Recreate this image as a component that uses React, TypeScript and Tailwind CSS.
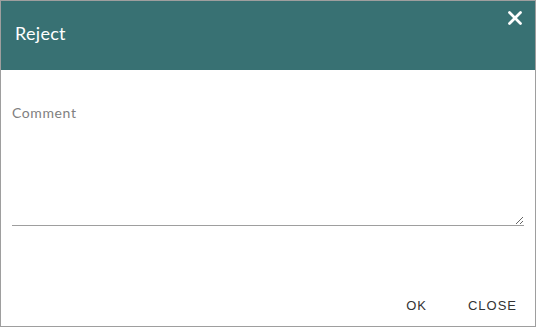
import { X } from 'lucide-react';

export default function App() {
  return (
    <div className="w-[536px] h-[327px] border border-[#9e9e9e] bg-white flex flex-col">
      <div className="h-[69px] bg-[#387173] flex justify-between pl-[14px] pr-[9px]">
        <h2 className="self-center -mt-[4px] text-white text-[18px] font-normal tracking-[0.3px]" style={{ fontFamily: 'Lato, sans-serif' }}>
          Reject
        </h2>
        <button className="self-start mt-[6px] text-white">
          <X className="w-[22px] h-[22px]" strokeWidth={3} />
        </button>
      </div>
      <div className="px-[11px] pt-[33px]">
        <textarea
          placeholder="Comment"
          className="w-full h-[123px] border-0 border-b border-[#9e9e9e] outline-none text-[14px] text-[#333] placeholder:text-[#808080] resize-y leading-5 pt-0 tracking-[0.6px]"
          style={{ fontFamily: 'Lato, sans-serif' }}
        />
      </div>
      <div className="flex-1" />
      <div className="flex justify-end items-center gap-[25px] pr-[10px] pb-[5px]">
        <button
          className="px-[8px] py-[6px] text-[13px] tracking-[1px] text-[#333] uppercase"
          style={{ fontFamily: '"Liberation Sans", Arial, sans-serif' }}
        >
          OK
        </button>
        <button
          className="px-[8px] py-[6px] text-[13px] tracking-[1px] text-[#333] uppercase"
          style={{ fontFamily: '"Liberation Sans", Arial, sans-serif' }}
        >
          Close
        </button>
      </div>
    </div>
  );
}
